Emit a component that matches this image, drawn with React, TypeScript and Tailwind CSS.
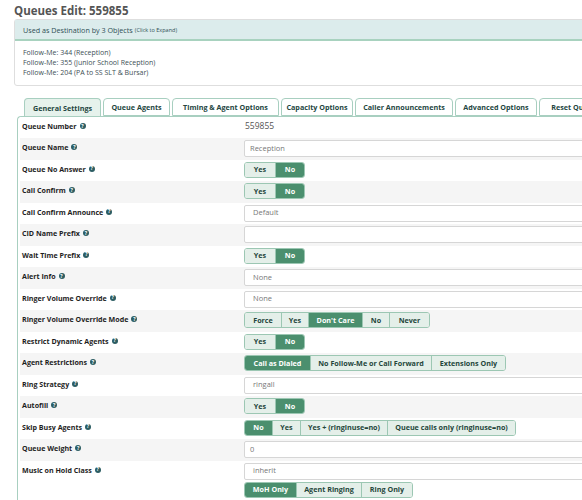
import React from "react";

const Help = () => (
  <span className="inline-flex items-center justify-center w-[6px] h-[6px] rounded-full bg-[#2c5d63] text-white text-[5px] font-bold leading-none ml-[3px] align-middle relative top-[-1px]">?</span>
);

type Seg = { label: string; w: string; active?: boolean };

const Group = ({ items }: { items: Seg[] }) => (
  <div className="inline-flex self-start h-[16px] rounded-[3px] border border-[#9cc7b3] overflow-hidden">
    {items.map((s, i) => (
      <div
        key={i}
        className={
          s.w +
          " shrink-0 flex items-center justify-center text-[7.2px] font-bold whitespace-nowrap " +
          (i > 0 ? "border-l border-[#9cc7b3] " : "") +
          (s.active ? "bg-[#4b8f6e] text-white" : "bg-[#e4efe9] text-[#24463b]")
        }
      >
        {s.label}
      </div>
    ))}
  </div>
);

const Input = ({ value, text }: { value: string; text?: boolean }) => (
  <div
    className={
      "h-[17px] w-[360px] border border-[#d6d6d6] rounded-[2px] bg-white flex items-center text-[7.5px] text-[#777] " +
      (text ? "pl-[5px]" : "pl-[8px]")
    }
  >
    {value}
  </div>
);

const YesNo = () => (
  <Group
    items={[
      { label: "Yes", w: "w-[30px]" },
      { label: "No", w: "w-[29px]", active: true },
    ]}
  />
);

const Row = ({ label, grey, children, h = "h-[21.5px]" }: { label: string; grey?: boolean; children?: React.ReactNode; h?: string }) => (
  <div className={"flex " + h + " " + (grey ? "bg-[#f5f5f5]" : "bg-white")}>
    <div className="w-[224px] shrink-0 pl-[2px] pt-[4px] text-[7.1px] font-bold text-[#1e1e1e] leading-[10px]">
      {label}
      <Help />
    </div>
    <div className="flex flex-col gap-[2px] pt-[2px]">{children}</div>
  </div>
);

const tabs = [
  { l: "General Settings", w: "w-[77px]", active: true },
  { l: "Queue Agents", w: "w-[67px]" },
  { l: "Timing & Agent Options", w: "w-[107px]" },
  { l: "Capacity Options", w: "w-[72px]" },
  { l: "Caller Announcements", w: "w-[98px]" },
  { l: "Advanced Options", w: "w-[82px]" },
  { l: "Reset Queue Stats", w: "w-[90px]" },
];

export default function App() {
  return (
    <div className="w-[582px] h-[500px] overflow-hidden bg-white" style={{ fontFamily: '"Open Sans", "Noto Sans", sans-serif' }}>
      <div className="w-[680px] pl-[14px]">
        <div className="pt-[3px] h-[19px] text-[11.5px] font-bold text-[#555] leading-[15px]">Queues Edit: 559855</div>
        <div className="border border-[#dedede] rounded-[3px] h-[67px]">
          <div className="h-[21px] bg-[#dcecec] border-b-2 border-[#a8d2bf] flex items-center pl-[8px] pt-[1px] text-[7.2px] text-[#2f4f55]">
            Used as Destination by 3 Objects
            <span className="text-[5.5px] ml-[2px]">(Click to Expand)</span>
          </div>
          <div className="pt-[7px] pl-[8px] text-[7px] leading-[10px] text-[#3d4f55]">
            <div>Follow-Me: 344 (Reception)</div>
            <div>Follow-Me: 355 (Junior School Reception)</div>
            <div>Follow-Me: 204 (PA to SS SLT &amp; Bursar)</div>
          </div>
        </div>

        <div className="mt-[12px] ml-[3px]">
          <div className="flex gap-[2px] pl-[7px] h-[18px] items-end">
            {tabs.map((t, i) => (
              <div
                key={i}
                className={
                  t.w +
                  " shrink-0 h-[18px] flex items-center justify-center pt-[1px] rounded-t-[4px] border border-[#a8cfc0] text-[7.2px] font-bold text-[#24463f] whitespace-nowrap " +
                  (t.active ? "bg-[#e6f2ec] border-b-0" : "bg-white")
                }
              >
                {t.l}
              </div>
            ))}
          </div>
          <div className="border-l border-t border-[#a8cfc0] rounded-tl-[4px] pl-[2px]">
            <div className="flex h-[21px] bg-white">
              <div className="w-[224px] shrink-0 pl-[2px] pt-[4px] text-[7.1px] font-bold text-[#1e1e1e] leading-[10px]">
                Queue Number
                <Help />
              </div>
              <div className="pt-[4px] pl-[1px] text-[8.5px] text-[#555] leading-[10px]">559855</div>
            </div>
            <Row label="Queue Name" grey><Input value="Reception" text /></Row>
            <Row label="Queue No Answer"><YesNo /></Row>
            <Row label="Call Confirm" grey><YesNo /></Row>
            <Row label="Call Confirm Announce"><Input value="Default" /></Row>
            <Row label="CID Name Prefix" grey><Input value="" text /></Row>
            <Row label="Wait Time Prefix"><YesNo /></Row>
            <Row label="Alert Info" grey><Input value="None" /></Row>
            <Row label="Ringer Volume Override"><Input value="None" /></Row>
            <Row label="Ringer Volume Override Mode" grey>
              <Group
                items={[
                  { label: "Force", w: "w-[36px]" },
                  { label: "Yes", w: "w-[27px]" },
                  { label: "Don't Care", w: "w-[54px]", active: true },
                  { label: "No", w: "w-[27px]" },
                  { label: "Never", w: "w-[40px]" },
                ]}
              />
            </Row>
            <Row label="Restrict Dynamic Agents"><YesNo /></Row>
            <Row label="Agent Restrictions" grey>
              <Group
                items={[
                  { label: "Call as Dialed", w: "w-[65px]", active: true },
                  { label: "No Follow-Me or Call Forward", w: "w-[121px]" },
                  { label: "Extensions Only", w: "w-[74px]" },
                ]}
              />
            </Row>
            <Row label="Ring Strategy"><Input value="ringall" /></Row>
            <Row label="Autofill" grey><YesNo /></Row>
            <Row label="Skip Busy Agents">
              <Group
                items={[
                  { label: "No", w: "w-[27px]", active: true },
                  { label: "Yes", w: "w-[28px]" },
                  { label: "Yes + (ringinuse=no)", w: "w-[87px]" },
                  { label: "Queue calls only (ringinuse=no)", w: "w-[128px]" },
                ]}
              />
            </Row>
            <Row label="Queue Weight" grey><Input value="0" text /></Row>
            <Row label="Music on Hold Class" h="h-[42px]">
              <Input value="inherit" />
              <Group
                items={[
                  { label: "MoH Only", w: "w-[51px]", active: true },
                  { label: "Agent Ringing", w: "w-[65px]" },
                  { label: "Ring Only", w: "w-[51px]" },
                ]}
              />
            </Row>
          </div>
        </div>
      </div>
    </div>
  );
}
